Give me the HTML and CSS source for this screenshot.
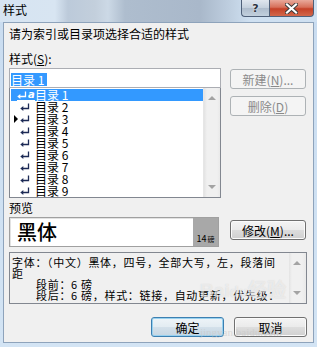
FILE: index.html
```html
<!DOCTYPE html>
<html lang="zh-CN">
<head>
    <meta charset="UTF-8">
    <title>样式</title>
    <link rel="stylesheet" href="styles.css">
</head>
<body>
    <div class="window">
        <div class="titlebar">
            <span class="title">样式</span>
            <div class="caption-btns">
                <span class="cap help">?</span>
                <span class="cap close">
                    <svg width="13" height="11" viewBox="0 0 13 11">
                        <path d="M2 1.5 L11 9.5 M11 1.5 L2 9.5" stroke="#3a3a3a" stroke-width="4" stroke-linecap="square"/>
                        <path d="M2 1.5 L11 9.5 M11 1.5 L2 9.5" stroke="#fff" stroke-width="2.2" stroke-linecap="square"/>
                    </svg>
                </span>
            </div>
        </div>

        <div class="frame">
            <div class="client">
                <div class="intro">请为索引或目录项选择合适的样式</div>
                <div class="label">样式(<u>S</u>):</div>

                <div class="picker">
                    <div class="picker-left">
                        <div class="input"><span class="sel">目录 1</span></div>
                        <div class="listbox">
                            <div class="rows" id="styleRows"></div>
                            <div class="vscroll">
                                <span class="arr up"></span>
                                <span class="arr down"></span>
                            </div>
                        </div>
                    </div>
                    <div class="side-btns">
                        <button class="btn" disabled>新建(<u>N</u>)...</button>
                        <button class="btn" disabled>删除(<u>D</u>)</button>
                    </div>
                </div>

                <div class="label label-preview">预览</div>
                <div class="preview-row">
                    <div class="preview">
                        <span class="sample">黑体</span>
                        <span class="size">14<small>磅</small></span>
                    </div>
                    <button class="btn btn-modify">修改(<u>M</u>)...</button>
                </div>

                <div class="desc">
                    <div class="desc-text">
                        <div>字体：（中文）黑体，四号，全部大写，左，段落间</div>
                        <div>距</div>
                        <div class="ind">段前：6 磅</div>
                        <div class="ind">段后：6 磅，样式：链接，自动更新，优先级：</div>
                    </div>
                    <div class="vscroll">
                        <span class="arr up"></span>
                        <span class="arr down"></span>
                    </div>
                </div>

                <div class="actions">
                    <button class="btn btn-ok">确定</button>
                    <button class="btn btn-cancel">取消</button>
                </div>

                <!-- baidu watermark from the original picture -->
                <div class="watermark">
                    <span class="wm-logo">Bai<b>du</b>经验</span>
                    <span class="wm-url">jingyan.baidu.com</span>
                </div>
            </div>
        </div>
    </div>

    <script>
        const rows = document.getElementById('styleRows');
        const arrow = '<svg width="10" height="8" viewBox="0 0 10 8"><path d="M8.5 0.5 V5.5 H2.5" fill="none" stroke="currentColor" stroke-width="1.3"/><path d="M0.3 5.5 L3.3 3 L3.3 8 Z" fill="currentColor"/></svg>';

        for (let i = 1; i <= 9; i++) {
            const row = document.createElement('div');
            row.className = 'row' + (i === 1 ? ' active' : '');
            const icon = i === 1
                ? `<span class="linked">${arrow}<i>a</i></span>`
                : arrow;
            row.innerHTML = `
                <span class="mark">${i === 3 ? '<span class="tri"></span>' : ''}</span>
                <span class="ico">${icon}</span>
                <span class="name">目录 ${i}</span>
            `;
            rows.appendChild(row);
        }
    </script>
</body>
</html>
```

FILE: styles.css
```css
body {
    margin: 0;
    font-family: "Noto Sans CJK SC", "Liberation Sans", sans-serif;
    font-size: 12px;
    color: #000;
}

.window {
    width: 317px;
    height: 347px;
    display: flex;
    flex-direction: column;
    overflow: hidden;
    background: linear-gradient(#c9dcf0, #d3e4f4);
}

.titlebar {
    height: 22px;
    flex: none;
    display: flex;
    justify-content: space-between;
    align-items: flex-start;
    background:
        linear-gradient(to right,
            #d6e4f2 0, #d8e5f2 55px,
            #bccada 68px, #c3cfdc 95px,
            #ccd9e6 108px, #aebdce 125px,
            #a9b8ca 200px, #bfcfe0 230px,
            #cfe0f1 250px, #cfe0f1 317px);
}

.title {
    padding: 3px 0 0 3px;
    line-height: 14px;
}

.caption-btns {
    display: flex;
    margin-right: 3px;
}

.cap {
    height: 17px;
    box-sizing: border-box;
    display: flex;
    justify-content: center;
    align-items: center;
    border: 1px solid #4f6079;
    border-top: none;
}

.cap.help {
    width: 28px;
    border-radius: 0 0 0 4px;
    border-right: none;
    background: linear-gradient(#dfe6ee, #c3cfdc 50%, #aebccc 51%, #c2d0de);
    font-family: "DejaVu Sans", sans-serif;
    font-weight: bold;
    font-size: 11px;
    color: #2c3440;
    text-shadow: 0 0 2px #fff;
}

.cap.close {
    width: 45px;
    border-radius: 0 0 4px 0;
    background: linear-gradient(#e9a99b, #d7705a 45%, #c54128 55%, #d2684b);
}

.frame {
    flex: 1;
    display: flex;
    padding: 0 4px 4px 3px;
}

.client {
    flex: 1;
    position: relative;
    border: 1px solid #8ea3bb;
    background: #f0f0f0;
    padding: 4px 6px 0 5px;
}

.intro,
.label {
    line-height: 14px;
}

.label {
    margin-top: 11px;
}

.picker {
    display: flex;
    gap: 9px;
    margin-top: 2px;
}

.picker-left {
    width: 212px;
}

.input {
    height: 20px;
    box-sizing: border-box;
    border: 1px solid #abadb3;
    background: #fff;
    padding: 2px 0 0 1px;
}

.sel {
    display: inline-block;
    line-height: 13px;
    padding-right: 3px;
    background: #3399ff;
    color: #fff;
}

.listbox {
    height: 110px;
    box-sizing: border-box;
    display: flex;
    border: 1px solid #828790;
    border-top: none;
    background: #fff;
}

.rows {
    flex: 1;
    padding-top: 1px;
}

.row {
    height: 12px;
    line-height: 12px;
    margin-left: 1px;
    display: flex;
    align-items: center;
    color: #1d2b56;
}

.row .name {
    margin-left: 1px;
    color: #000;
}

.row.active {
    background: #3399ff;
    color: #fff;
}

.row.active .name {
    color: #fff;
}

.mark {
    width: 6px;
    display: flex;
    align-items: center;
    padding-left: 3px;
    box-sizing: border-box;
}

.tri {
    width: 0;
    height: 0;
    border-top: 4px solid transparent;
    border-bottom: 4px solid transparent;
    border-left: 4px solid #000;
}

.ico {
    width: 17px;
    display: flex;
    align-items: center;
    padding-left: 3px;
    box-sizing: border-box;
}

.linked {
    display: flex;
    align-items: center;
    border-bottom: 1px solid #fff;
    margin-left: -3px;
    height: 10px;
}

.linked i {
    font-family: "DejaVu Sans", sans-serif;
    font-weight: bold;
    font-size: 10px;
    line-height: 10px;
    margin-left: 1px;
}

.vscroll {
    width: 17px;
    flex: none;
    position: relative;
    background: linear-gradient(to right, #e3e3e3, #f0f0f0 3px, #f0f0f0 13px, #e9e9e9);
    border-left: 1px solid #e6e6e6;
    box-sizing: border-box;
}

.arr {
    position: absolute;
    left: 4px;
    width: 0;
    height: 0;
    border-left: 4px solid transparent;
    border-right: 4px solid transparent;
}

.arr.up {
    top: 8px;
    border-bottom: 4px solid #a3a3a3;
}

.arr.down {
    bottom: 8px;
    border-top: 4px solid #a3a3a3;
}

.side-btns {
    display: flex;
    flex-direction: column;
    gap: 7px;
    padding-top: 1px;
}

.btn {
    width: 76px;
    height: 20px;
    box-sizing: border-box;
    padding: 0;
    border: 1px solid #707070;
    border-radius: 3px;
    background: linear-gradient(#f4f4f4, #ebebeb 48%, #dddddd 52%, #d0d0d0);
    box-shadow: inset 0 0 0 1px #fbfbfb;
    font-family: "Noto Sans CJK SC", sans-serif;
    font-size: 12px;
    line-height: 17px;
    color: #000;
}

.btn:disabled {
    border-color: #adb2b5;
    background: #f4f4f4;
    box-shadow: none;
    color: #8a8a8a;
}

.label-preview {
    margin-top: 3px;
}

.preview-row {
    display: flex;
    align-items: flex-start;
    gap: 11px;
    margin-top: 2px;
}

.preview {
    width: 210px;
    height: 30px;
    box-sizing: border-box;
    display: flex;
    border: 1px solid #a0a0a0;
    box-shadow: inset 1px 1px 0 #e2e2e2;
    background: #fff;
}

.sample {
    flex: 1;
    padding-left: 7px;
    font-size: 20px;
    line-height: 28px;
    font-weight: 500;
}

.size {
    width: 25px;
    background: #a8a8a8;
    display: flex;
    align-items: flex-end;
    justify-content: center;
    font-size: 9px;
    line-height: 12px;
    padding-bottom: 1px;
}

.size small {
    font-size: 7px;
    margin-left: 1px;
}

.btn-modify {
    margin-top: 3px;
}

.desc {
    width: 298px;
    height: 52px;
    box-sizing: border-box;
    margin-top: 5px;
    display: flex;
    border: 1px solid #828790;
    background: #f0f0f0;
}

.desc-text {
    flex: 1;
    overflow: hidden;
    padding: 4px 0 0 2px;
    font-size: 11px;
    line-height: 11px;
    letter-spacing: 0.7px;
    white-space: nowrap;
}

.ind {
    padding-left: 24px;
}

.desc .vscroll {
    border-left: none;
}

.actions {
    display: flex;
    justify-content: flex-end;
    gap: 10px;
    margin-top: 13px;
}

.actions .btn {
    width: 73px;
}

.btn-ok {
    border-color: #3c7fb1;
    background: linear-gradient(#eef4f8, #e3ecf2 48%, #d3e0ea 52%, #c6d6e2);
    box-shadow: inset 0 0 0 1px #98d1ef;
}

.watermark {
    position: absolute;
    left: 196px;
    top: 258px;
    display: flex;
    flex-direction: column;
    color: rgba(255, 255, 255, 0.55);
    pointer-events: none;
}

.wm-logo {
    font-family: "Liberation Sans", sans-serif;
    font-weight: bold;
    font-size: 19px;
    line-height: 20px;
    text-shadow: 0 0 1px rgba(150, 150, 150, 0.35);
}

.wm-logo b {
    font-size: 15px;
}

.wm-url {
    margin-top: 24px;
    font-family: "Liberation Serif", serif;
    font-size: 11px;
    color: rgba(200, 200, 200, 0.6);
}
```
